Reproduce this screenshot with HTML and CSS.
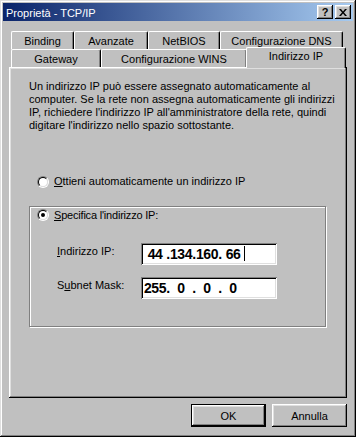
FILE: index.html
```html
<!DOCTYPE html>
<html lang="it">
<head>
    <meta charset="UTF-8">
    <title>Proprietà - TCP/IP</title>
    <link rel="stylesheet" href="styles.css">
</head>
<body>
    <div class="window">
        <div class="titlebar">
            <span class="title">Proprietà - TCP/IP</span>
            <div class="title-buttons">
                <button class="tb-btn">?</button>
                <button class="tb-btn">
                    <svg width="8" height="7" viewBox="0 0 8 7">
                        <path d="M0 0h2l2 2.5 2-2.5h2l-3 3.5 3 3.5h-2l-2-2.5-2 2.5h-2l3-3.5z" fill="#000"/>
                    </svg>
                </button>
            </div>
        </div>

        <!-- Schede -->
        <div class="tabs">
            <div class="tab-row">
                <div class="tab tab-binding">Binding</div>
                <div class="tab tab-avanzate">Avanzate</div>
                <div class="tab tab-netbios">NetBIOS</div>
                <div class="tab tab-dns">Configurazione DNS</div>
            </div>
            <div class="tab-row">
                <div class="tab tab-gateway">Gateway</div>
                <div class="tab tab-wins">Configurazione WINS</div>
                <div class="tab tab-ip active">Indirizzo IP</div>
            </div>
        </div>

        <div class="panel">
            <p class="intro">
                Un indirizzo IP può essere assegnato automaticamente al<br>
                computer. Se la rete non assegna automaticamente gli indirizzi<br>
                IP, richiedere l'indirizzo IP all'amministratore della rete, quindi<br>
                digitare l'indirizzo nello spazio sottostante.
            </p>

            <div class="option first-option">
                <span class="radio"><span class="radio-inner"></span></span>
                <span><u>O</u>ttieni automaticamente un indirizzo IP</span>
            </div>

            <div class="group">
                <div class="option legend">
                    <span class="radio"><span class="radio-inner checked"></span></span>
                    <span><u>S</u>pecifica l'indirizzo IP:</span>
                </div>

                <div class="field-row ip-row">
                    <span class="label"><u>I</u>ndirizzo IP:</span>
                    <div class="ip-field">
                        <span class="octet">44</span><span class="dot">.</span>
                        <span class="octet">134</span><span class="dot">.</span>
                        <span class="octet">160</span><span class="dot">.</span>
                        <span class="octet">66</span><span class="caret"></span>
                    </div>
                </div>

                <div class="field-row">
                    <span class="label">S<u>u</u>bnet Mask:</span>
                    <div class="ip-field">
                        <span class="octet">255</span><span class="dot">.</span>
                        <span class="octet">0</span><span class="dot">.</span>
                        <span class="octet">0</span><span class="dot">.</span>
                        <span class="octet">0</span>
                    </div>
                </div>
            </div>
        </div>

        <div class="actions">
            <button class="button default">OK</button>
            <button class="button">Annulla</button>
        </div>
    </div>
</body>
</html>
```

FILE: styles.css
```css
* {
    box-sizing: border-box;
}

body {
    margin: 0;
    background: #c0c0c0;
    font-family: "Liberation Sans", Arial, sans-serif;
    font-size: 11px;
    color: #000;
}

button {
    font-family: inherit;
    font-size: 11px;
    color: #000;
    border: none;
    margin: 0;
    padding: 0;
    background: #c0c0c0;
}

.window {
    width: 356px;
    height: 437px;
    padding: 3px;
    background: #c0c0c0;
    box-shadow: inset -1px -1px #000, inset 1px 1px #dfdfdf, inset -2px -2px #808080, inset 2px 2px #fff;
}

.titlebar {
    height: 18px;
    display: flex;
    align-items: center;
    justify-content: space-between;
    padding: 0 2px 0 3px;
    background: linear-gradient(to right, #0a246a, #a6caf0);
    color: #fff;
}

.title {
    padding-top: 1px;
}

.title-buttons {
    display: flex;
    gap: 2px;
}

.tb-btn {
    width: 16px;
    height: 14px;
    display: flex;
    align-items: center;
    justify-content: center;
    font-weight: bold;
    font-size: 11px;
    line-height: 14px;
    box-shadow: inset -1px -1px #000, inset 1px 1px #fff, inset -2px -2px #808080, inset 2px 2px #dfdfdf;
}

/* Schede */
.tabs {
    margin: 10px 6px 0;
    padding: 0 2px;
}

.tab-row {
    display: flex;
    height: 18px;
}

.tab {
    height: 18px;
    padding-top: 3px;
    line-height: 13px;
    text-align: center;
    white-space: nowrap;
    background: #c0c0c0;
    border-top: 1px solid #fff;
    border-left: 1px solid #fff;
    border-right: 1px solid #000;
    border-radius: 2px 2px 0 0;
    box-shadow: inset -1px 0 #808080;
}

.tab-binding { width: 63px; }
.tab-avanzate { width: 74px; }
.tab-netbios { width: 72px; }
.tab-dns { width: 123px; }
.tab-gateway { width: 90px; }
.tab-wins { width: 146px; }
.tab-ip { width: 98px; }

.tab.active {
    position: relative;
    z-index: 1;
    width: 100px;
    height: 21px;
    margin: -2px -1px -1px;
    padding-top: 2px;
}

.panel {
    margin: 0 6px;
    height: 331px;
    padding: 13px 0 0 20px;
    box-shadow: inset -1px -1px #000, inset 1px 1px #fff, inset -2px -2px #808080, inset 2px 2px #dfdfdf;
}

.intro {
    margin: 0;
    line-height: 13px;
}

.option {
    display: flex;
    align-items: center;
    height: 13px;
    line-height: 13px;
}

.first-option {
    margin: 43px 0 0 8px;
}

.radio {
    width: 12px;
    height: 12px;
    margin-right: 5px;
    border-radius: 50%;
    border: 1px solid;
    border-color: #808080 #fff #fff #808080;
    flex-shrink: 0;
}

.radio-inner {
    display: flex;
    align-items: center;
    justify-content: center;
    width: 10px;
    height: 10px;
    border-radius: 50%;
    border: 1px solid;
    border-color: #000 #dfdfdf #dfdfdf #000;
    background: #fff;
}

.radio-inner.checked::after {
    content: "";
    width: 4px;
    height: 4px;
    border-radius: 50%;
    background: #000;
}

/* Riquadro "Specifica" */
.group {
    width: 297px;
    height: 121px;
    margin-top: 18px;
    border: 1px solid #808080;
    box-shadow: inset 1px 1px #fff, 1px 1px #fff;
}

.legend {
    display: inline-flex;
    margin: -10px 0 0 6px;
    padding: 0 3px 0 1px;
    background: #c0c0c0;
    letter-spacing: -0.2px;
}

.field-row {
    display: flex;
    height: 22px;
    margin-left: 27px;
}

.ip-row {
    margin-top: 21px;
    margin-bottom: 12px;
}

.label {
    width: 84px;
    padding-top: 2px;
    line-height: 13px;
}

.ip-field {
    display: flex;
    align-items: center;
    width: 136px;
    height: 22px;
    padding-left: 3px;
    background: #fff;
    box-shadow: inset 1px 1px #808080, inset -1px -1px #fff, inset 2px 2px #000, inset -2px -2px #dfdfdf;
    font-weight: bold;
    font-size: 14px;
    letter-spacing: -0.5px;
}

.octet {
    display: flex;
    align-items: center;
    justify-content: center;
    width: 22px;
}

.dot {
    width: 4px;
    text-align: center;
}

.caret {
    width: 1px;
    height: 15px;
    background: #000;
}

/* Pulsanti */
.actions {
    display: flex;
    justify-content: flex-end;
    gap: 6px;
    margin: 6px 6px 0;
}

.button {
    width: 75px;
    height: 23px;
    box-shadow: inset -1px -1px #000, inset 1px 1px #fff, inset -2px -2px #808080, inset 2px 2px #dfdfdf;
}

.button.default {
    box-shadow: inset 0 0 0 1px #000, inset -2px -2px #000, inset 2px 2px #fff, inset -3px -3px #808080, inset 3px 3px #dfdfdf;
}
```
